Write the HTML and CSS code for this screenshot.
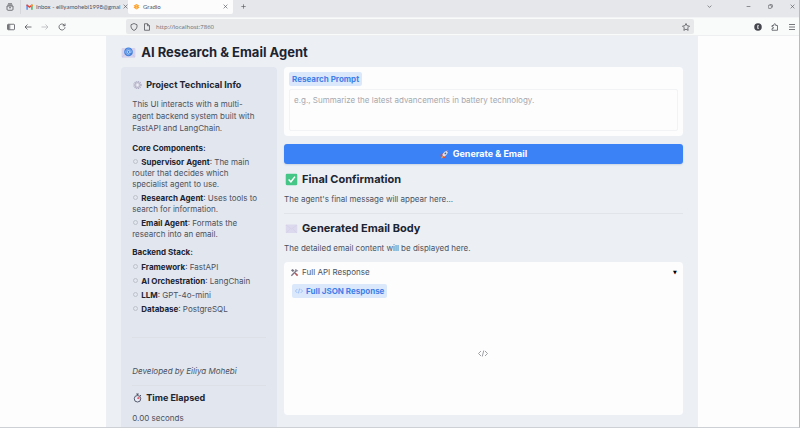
FILE: index.html
```html
<!DOCTYPE html>
<html lang="en">
<head>
<meta charset="utf-8">
<title>Gradio</title>
<link rel="stylesheet" href="styles.css">
</head>
<body>
<div class="window">
  <header class="tabs">
    <button class="icon-btn tab-overview" aria-label="Tab overview"><svg class="icon" viewBox="0 0 16 16"><path d="M4 1.500h8M3 4h10M2 6h12v6.500q0 2-2 2H4q-2 0-2-2zM6 9.500h4"/></svg></button>
    <div class="tab">
      <svg class="favicon" viewBox="0 0 16 12"><path d="M1 12V1h3v11z" fill="#4285f4"/><path d="M12 12V1h3v11z" fill="#34a853"/><path d="M1 3V1q1-1.5 3 0l4 3.500 4-3.500q2-1.500 3 0v2L8 8.500z" fill="#ea4335"/><path d="M12 1q2-1.500 3 0v2l-3 2.500z" fill="#fbbc04"/></svg>
      <span class="tab-name">Inbox - eiliyamohebi1998@gmai</span>
      <button class="icon-btn" aria-label="Close inbox tab"><svg class="icon close" viewBox="0 0 16 16"><path d="M2 2l12 12M14 2L2 14"/></svg></button>
    </div>
    <div class="tab active">
      <svg class="favicon" viewBox="0 0 16 14"><path d="M8 0l7 4-3 2 3 2-7 5-7-5 3-2-3-2z" fill="#ff9d2e"/><path d="M8 2l3 2-3 2-3-2zm0 5l3 2-3 2-3-2z" fill="#ffcb68"/></svg>
      <span class="tab-name">Gradio</span>
      <button class="icon-btn" aria-label="Close Gradio tab"><svg class="icon close" viewBox="0 0 16 16"><path d="M2 2l12 12M14 2L2 14"/></svg></button>
    </div>
    <button class="icon-btn new-tab" aria-label="New tab"><svg class="icon close thin" viewBox="0 0 16 16"><path d="M8 1v14M1 8h14"/></svg></button>
    <div class="window-controls">
      <button class="icon-btn list-tabs" aria-label="List tabs"><svg class="icon close" viewBox="0 0 16 16"><path d="M2 5l6 6 6-6"/></svg></button>
      <button class="icon-btn" aria-label="Minimize"><svg class="icon close" viewBox="0 0 16 16"><path d="M2 8h12"/></svg></button>
      <button class="icon-btn" aria-label="Restore"><svg class="icon close" viewBox="0 0 16 16"><rect x="1" y="4" width="10" height="10" rx="2"/><path d="M5 1.500h6q3.500 0 3.500 3.500v6"/></svg></button>
      <button class="icon-btn" aria-label="Close window"><svg class="icon close" viewBox="0 0 16 16"><path d="M2 2l12 12M14 2L2 14"/></svg></button>
    </div>
  </header>
  <nav class="toolbar">
    <div class="nav-buttons">
      <button class="icon-btn" aria-label="Sidebar"><svg class="icon" viewBox="0 0 16 16"><rect x="1" y="2.500" width="14" height="11" rx="1.500"/><path d="M5.500 3v10M3 3v10"/></svg></button>
      <button class="icon-btn" aria-label="Back"><svg class="icon" viewBox="0 0 16 16"><path d="M15 8H2M7 3L2 8l5 5"/></svg></button>
      <button class="icon-btn faded" aria-label="Forward"><svg class="icon" viewBox="0 0 16 16"><path d="M1 8h13M9 3l5 5-5 5"/></svg></button>
      <button class="icon-btn" aria-label="Reload"><svg class="icon" viewBox="0 0 16 16"><path d="M14 8.500A6 6 0 1 1 12 3.500L14 5.500M14 1v4.500H9.500"/></svg></button>
    </div>
    <div class="address">
      <svg class="icon" viewBox="0 0 16 16"><path d="M8 1l6 2.500V8q-1 5-6 7-5-2-6-7V3.500z"/></svg>
      <svg class="icon" viewBox="0 0 16 16"><path d="M3 1.500h6l4 4v9H3zM9 1.500v4h4"/></svg>
      <input class="url" type="text" aria-label="Address" value="http://localhost:7860">
      <button class="icon-btn" aria-label="Bookmark"><svg class="icon" viewBox="0 0 16 16"><path d="M8 1l2.100 4.500 4.900.7-3.500 3.500.8 5L8 12.400l-4.300 2.300.8-5L1 6.200l4.900-.7z"/></svg></button>
    </div>
    <div class="extensions">
      <button class="icon-btn" aria-label="Account"><svg class="icon" viewBox="0 0 16 16"><circle cx="8" cy="8" r="7.500" fill="#45464e" stroke="none"/><path d="M10 5H7v6h3M7 8h3" stroke="#ddd"/></svg></button>
      <button class="icon-btn" aria-label="Extensions"><svg class="icon" viewBox="0 0 16 16"><path d="M2 5h3.500V3.500a2 2 0 0 1 4 0V5H13v9.500H2V11h1.500a1.500 1.500 0 0 0 0-3H2z"/></svg></button>
      <button class="icon-btn" aria-label="Menu"><svg class="icon" viewBox="0 0 16 16"><path d="M2 3h12M2 8h12M2 13h12"/></svg></button>
    </div>
  </nav>
  <main class="page">
    <div class="app">
      <h1 class="title">
        <svg class="emoji" viewBox="0 0 26 22"><rect x="1" y="3" width="24" height="17" rx="2" fill="#d7d3ec"/><path d="M2 19l8-8M24 19l-8-8" stroke="#c3bddf"/><circle cx="13" cy="10" r="7.500" fill="#3f7edb"/><circle cx="13" cy="10" r="2.500" fill="none" stroke="#dcecff" stroke-width="1.500"/><path d="M15.500 7v4q2 2 2.500-1a5 5 0 1 0-3 4.500" fill="none" stroke="#a8cdf9" stroke-width="1.200"/></svg>
        AI Research &amp; Email Agent
      </h1>
      <div class="columns">
        <aside class="sidebar">
          <h2 class="side-title"><svg class="emoji small" viewBox="0 0 20 20"><circle cx="10" cy="10" r="7" fill="none" stroke="#a9a7c0" stroke-width="2.500" stroke-dasharray="2.200 1.500"/><circle cx="10" cy="10" r="5" fill="#d7d6e5" stroke="#9f9eb5" stroke-width="1.200"/><circle cx="10" cy="10" r="2" fill="#eef2f8"/></svg>Project Technical Info</h2>
          <p class="intro">This UI interacts with a multi-<br>agent backend system built with<br>FastAPI and LangChain.</p>
          <h3 class="group">Core Components:</h3>
          <ul class="items">
            <li><b>Supervisor Agent</b>: The main<br>router that decides which<br>specialist agent to use.</li>
            <li><b>Research Agent</b>: Uses tools to<br>search for information.</li>
            <li><b>Email Agent</b>: Formats the<br>research into an email.</li>
          </ul>
          <h3 class="group stack">Backend Stack:</h3>
          <ul class="items stack-items">
            <li><b>Framework</b>: FastAPI</li>
            <li><b>AI Orchestration</b>: LangChain</li>
            <li><b>LLM</b>: GPT-4o-mini</li>
            <li><b>Database</b>: PostgreSQL</li>
          </ul>
          <hr class="rule rule-stack">
          <p class="credit"><em>Developed by Eiliya Mohebi</em></p>
          <hr class="rule">
          <h2 class="side-title timer"><svg class="emoji small" viewBox="0 0 20 20"><path d="M7.500 2h5M10 2v3M15 4l2 2" stroke="#4d5265" stroke-width="2"/><circle cx="10" cy="11.500" r="6.500" fill="#e8edf5" stroke="#555a70" stroke-width="2"/><path d="M10 11.500V7a4.500 4.500 0 0 1 4 6z" fill="#e57b85"/><path d="M10 12l3-3" stroke="#ca3148" stroke-width="1.500"/></svg>Time Elapsed</h2>
          <p class="elapsed">0.00 seconds</p>
        </aside>
        <section class="content">
          <div class="card prompt">
            <label class="badge" for="prompt">Research Prompt</label>
            <textarea id="prompt" placeholder="e.g., Summarize the latest advancements in battery technology."></textarea>
          </div>
          <button class="generate"><svg class="rocket" viewBox="0 0 20 20"><path d="M7 8L2 9l-1 5 5-1zM12 13l-1 5-5 1 1-5z" fill="#d84a4a"/><path d="M5 11Q9 2 18 1q0 9-9 14z" fill="#dbe4ef"/><path d="M14 1.700L18 1l-.5 4.500z" fill="#e54d4d"/><circle cx="12" cy="7.500" r="2" fill="#4c678f"/><path d="M5 13l3 3-6 3z" fill="#ff9f36"/></svg>Generate &amp; Email</button>
          <h2 class="heading"><svg class="emoji" viewBox="0 0 26 22"><rect x="3" y="1" width="20" height="20" rx="2" fill="#45c586"/><path d="M8 11l4 4 7-9" fill="none" stroke="#fff" stroke-width="2.500"/></svg>Final Confirmation</h2>
          <p class="text">The agent's final message will appear here...</p>
          <hr class="rule">
          <h2 class="heading body-heading"><svg class="emoji" viewBox="0 0 26 22"><rect x="3" y="4" width="20" height="15" rx="1.500" fill="#dcd8ed"/><path d="M3.500 5l9.500 7 9.500-7M4 18.500l6-6M22 18.500l-6-6" fill="none" stroke="#d1cce5"/></svg>Generated Email Body</h2>
          <p class="text">The detailed email content will be displayed here.</p>
          <div class="card response">
            <button class="accordion"><span class="accordion-name"><svg class="tools" viewBox="0 0 20 20"><path d="M3 17L15 5" stroke="#7d7587" stroke-width="3"/><path d="M2 5l4-3 4 4-4 3z" fill="#777481"/><path d="M11 11l6 6" stroke="#b55759" stroke-width="3.500"/><path d="M13 2v4h5" fill="none" stroke="#8b8797" stroke-width="2.500"/></svg>Full API Response</span><span class="caret">▼</span></button>
            <div class="badge json"><svg class="code" viewBox="0 0 20 14"><path d="M6 2L1 7l5 5M14 2l5 5-5 5M11.500 1l-3 12"/></svg>Full JSON Response</div>
            <div class="empty"><svg class="code large" viewBox="0 0 20 14"><path d="M6 2L1 7l5 5M14 2l5 5-5 5M11.500 1l-3 12"/></svg></div>
          </div>
        </section>
      </div>
    </div>
  </main>
</div>
</body>
</html>
```
FILE: styles.css
```css
* { box-sizing: border-box; }
body { margin: 0; font-family: Inter, "Open Sans", sans-serif; font-size: 8px; line-height: 12px; color: #4b5260; }
h1, h2, h3, p, ul { margin: 0; padding: 0; }
button, input, textarea { font: inherit; color: inherit; border: 0; padding: 0; margin: 0; background: none; }
svg { flex: none; }

.window { height: 100vh; display: flex; flex-direction: column; overflow: hidden; border-right: 1px solid #b9babd; border-bottom: 1px solid #cdd1d5; background: #fdfdfe; }
.tabs { display: flex; align-items: center; height: 18px; flex: none; padding-bottom: 4px; background: #e6e7eb; border-bottom: 1px solid #f2f3f5; }
.icon-btn { display: flex; align-items: center; justify-content: center; }
.icon { width: 8px; height: 8px; fill: none; stroke: #53555b; stroke-width: 1.6; }
.icon.close { width: 5px; height: 5px; stroke-width: 2; }
.tab-overview { width: 20px; }
.tab { display: flex; align-items: center; gap: 3px; width: 108px; height: 14px; padding: 0 5px; border-left: 1px solid #d6d7dc; font-family: Lato, sans-serif; font-size: 6px; }
.tab.active { width: 105px; height: 15px; background: #fcfcfd; border: 0; border-radius: 2px; }
.tab-name { flex: 1; white-space: nowrap; }
.favicon { width: 7px; height: 6px; }
.new-tab { width: 20px; }
.window-controls { display: flex; gap: 17px; margin-left: auto; padding-right: 4px; }
.list-tabs { margin-right: 17px; }

.toolbar { display: flex; align-items: center; height: 18px; flex: none; background: #f9fafa; border-bottom: 1px solid #eeeff1; }
.nav-buttons { display: flex; gap: 9px; width: 126px; padding-left: 7px; }
.faded { opacity: .4; }
.address { flex: 1; display: flex; align-items: center; gap: 5px; height: 15px; padding: 0 4px; border-radius: 2px; background: #e8e9eb; }
.url { flex: 1; min-width: 0; height: 12px; font-family: "Open Sans", sans-serif; font-size: 6px; color: #686a70; }
.extensions { display: flex; gap: 9px; width: 105px; justify-content: flex-end; padding-right: 3px; }

.page { flex: 1; min-height: 0; display: flex; justify-content: center; padding-left: 5px; }
.app { width: 74.500%; padding: 7px 15px 0; background: #ecf0f5; display: flex; flex-direction: column; }
.title { display: flex; align-items: center; gap: 5px; height: 18px; font-size: 13px; line-height: 18px; color: #1c2431; }
.emoji { width: 15px; height: 13px; }
.columns { flex: 1; display: grid; grid-template-columns: 156fr 399fr; gap: 7px; padding-top: 6px; }
.sidebar { padding: 12px 11px 0; border-radius: 4px 4px 0 0; background: #e2e6ee; white-space: nowrap; }
.side-title { display: flex; align-items: center; gap: 3px; font-size: 9px; line-height: 12px; color: #1c2431; }
.emoji.small { width: 11px; height: 10px; }
.intro { margin-top: 7px; }
.group { margin-top: 8px; font-size: 8px; line-height: 12px; color: #1c2431; }
.group.stack { margin-top: 6px; }
.items { list-style: none; margin-top: 3px; line-height: 11px; }
.items li { margin-bottom: 3px; }
.stack-items { margin-top: 4px; }
.items li::before { content: ""; display: inline-block; width: 3px; height: 3px; margin: 0 3px 1px 1px; border: 1px solid #bcc1cb; border-radius: 50%; }
.items b { color: #1c2431; }
.rule { width: 100%; margin: 0; border: 0; border-top: 1px solid #e1e4e9; }
.sidebar .rule { border-color: #dde0e6; }
.rule-stack { margin-top: 22px; }
.credit { padding: 27px 0 8px; }
.timer { margin-top: 6px; }
.elapsed { margin-top: 8px; }

.content { display: flex; flex-direction: column; padding-bottom: 12px; }
.card { background: #fdfdfe; border-radius: 4px; }
.prompt { display: flex; flex-direction: column; align-items: flex-start; height: 69px; padding: 5px; }
.badge { display: flex; align-items: center; gap: 3px; padding: 1px 3px; border-radius: 2px; background: #dbe8fc; color: #3f7fe8; font-size: 8px; font-weight: 700; }
textarea { width: 100%; flex: 1; margin-top: 3px; padding: 4px; resize: none; border: 1px solid #f2f3f5; border-radius: 2px; }
textarea::placeholder { color: #a5a8ae; opacity: 1; }
.generate { display: flex; align-items: center; justify-content: center; gap: 4px; height: 20px; margin-top: 8px; border-radius: 3px; background: #3b82f6; color: #fff; font-size: 9px; font-weight: 700; box-shadow: 0 1px 2px #cbd4e2; }
.rocket { width: 9px; height: 9px; }
.heading { display: flex; align-items: center; gap: 3px; margin-top: 7px; font-size: 11px; line-height: 16px; color: #1c2431; }
.body-heading { margin-top: 6px; }
.text { margin: 6px 0 8px; }
.response { display: flex; flex-direction: column; align-items: flex-start; flex: 1; padding: 3px 6px 6px; }
.accordion { display: flex; align-items: center; justify-content: space-between; width: 100%; height: 14px; }
.accordion-name { display: flex; align-items: center; gap: 3px; }
.tools { width: 9px; height: 9px; }
.caret { font-family: "DejaVu Sans", sans-serif; font-size: 5px; color: #000; }
.json { margin: 5px 0 0 2px; }
.code { width: 8px; height: 6px; fill: none; stroke: #79a9f4; stroke-width: 1.6; }
.code.large { width: 10px; height: 7px; stroke: #85888e; }
.empty { flex: 1; width: 100%; display: flex; align-items: center; justify-content: center; }
```
